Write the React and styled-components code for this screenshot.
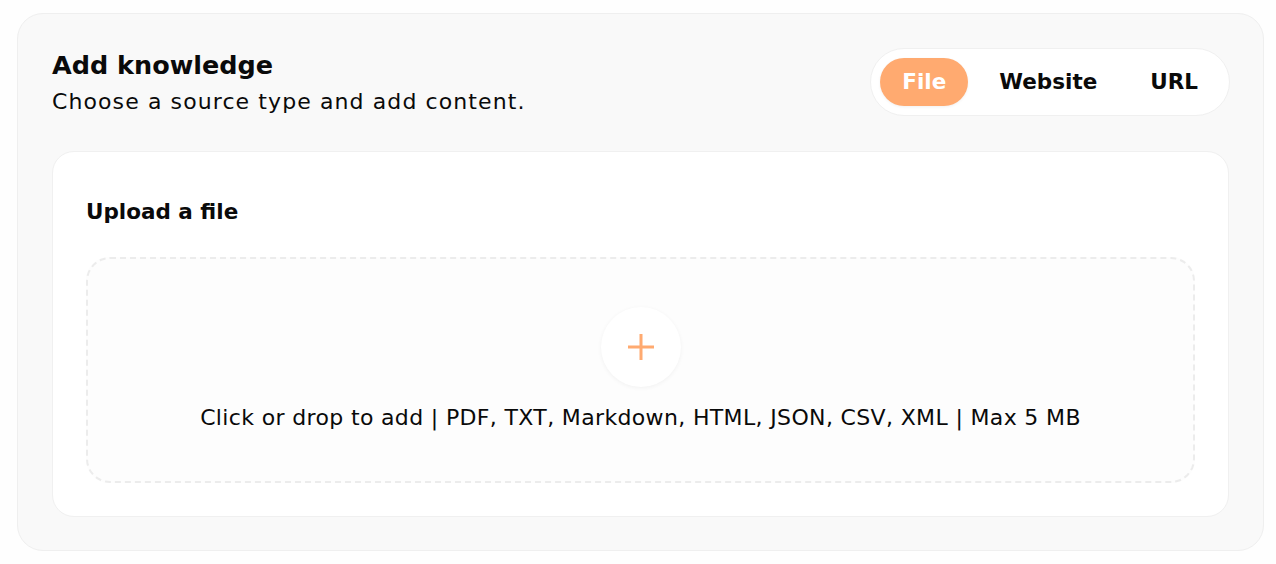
import React, { useState } from 'react';
import styled, { createGlobalStyle } from 'styled-components';

const GlobalStyle = createGlobalStyle`
    body {
        margin: 0;
        background: #fefefe;
        font-family: "DejaVu Sans", "Noto Sans", sans-serif;
        color: #0a0a0a;
    }`
;

const Page = styled.div`
    padding: 13px 12px 12px 17px;`
;

const Panel = styled.section`
    background: #f9f9f9;
    border: 1px solid #efefef;
    border-radius: 26px;
    padding: 33px 34px 33px 34px;`
;

const Header = styled.div`
    display: flex;
    justify-content: space-between;
    align-items: center;
    margin-bottom: 34px;`
;

const Title = styled.h2`
    margin: 0;
    font-size: 25.5px;
    line-height: 36px;
    font-weight: 700;`
;

const Subtitle = styled.p`
    margin: 4px 0 0 0;
    font-size: 22px;
    line-height: 30px;
    font-weight: 400;
    letter-spacing: 1.1px;`
;

const Tabs = styled.div`
    display: flex;
    gap: 9px;
    padding: 9px;
    margin-right: -1px;
    background: #fff;
    border: 1px solid #f0f0f0;
    border-radius: 34px;`
;

const Tab = styled.button`
    font-family: inherit;
    font-size: 21.5px;
    font-weight: 700;
    line-height: 48px;
    height: 48px;
    padding: 0 22px;
    border: none;
    border-radius: 24px;
    cursor: pointer;
    color: ${p => (p.$active ? '#fff' : '#0a0a0a')};
    background: ${p => (p.$active ? '#ffaa70' : 'transparent')};
    box-shadow: ${p => (p.$active ? '0 1px 3px rgba(0,0,0,0.06)' : 'none')};`
;

const Card = styled.div`
    background: #fff;
    border: 1px solid #f0f0f0;
    border-radius: 22px;
    padding: 44px 33px 33px 33px;`
;

const CardTitle = styled.h3`
    margin: 0 0 29px 0;
    font-size: 21.5px;
    line-height: 32px;
    font-weight: 700;`
;

const Drop = styled.div`
    height: 222px;
    border: 2px dashed #ececec;
    border-radius: 24px;
    background: #fdfdfd;
    display: flex;
    flex-direction: column;
    align-items: center;
    justify-content: center;
    gap: 16px;
    cursor: pointer;`
;

const AddCircle = styled.div`
    width: 80px;
    height: 80px;
    border-radius: 50%;
    background: #fff;
    box-shadow: 0 1px 4px rgba(0,0,0,0.05);
    display: flex;
    align-items: center;
    justify-content: center;`
;

const Hint = styled.div`
    font-size: 22px;
    line-height: 30px;
    letter-spacing: 0.35px;`
;

const tabs = ['File', 'Website', 'URL'];

export default function App() {
    const [tab, setTab] = useState('File');

    return (
        <Page>
            <GlobalStyle />
            <Panel>
                <Header>
                    <div>
                        <Title>Add knowledge</Title>
                        <Subtitle>Choose a source type and add content.</Subtitle>
                    </div>
                    <Tabs>
                        {tabs.map(t => (
                            <Tab key={t} $active={t === tab} onClick={() => setTab(t)}>{t}</Tab>
                        ))}
                    </Tabs>
                </Header>
                <Card>
                    <CardTitle>Upload a file</CardTitle>
                    <Drop>
                        <AddCircle>
                            <svg width="28" height="28" viewBox="0 0 28 28">
                                <path d="M14 1v26M1 14h26" stroke="#ffaa70" strokeWidth="3" />
                            </svg>
                        </AddCircle>
                        <Hint>Click or drop to add | PDF, TXT, Markdown, HTML, JSON, CSV, XML | Max 5 MB</Hint>
                    </Drop>
                </Card>
            </Panel>
        </Page>
    );
}
